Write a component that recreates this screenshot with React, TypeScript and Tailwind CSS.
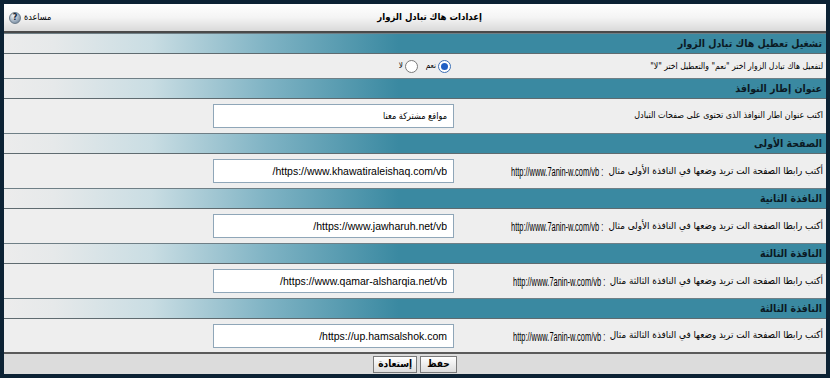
import React from "react";

const headerBg =
  "bg-[linear-gradient(to_left,#3a89a1_0%,#3a89a1_52%,#7fb3c4_68%,#c9dde3_82%,#e6e9ea_94%,#ececec_100%)]";

const arFont = "font-['DejaVu_Sans_Condensed','DejaVu_Sans',sans-serif]";
const latFont = "font-['Liberation_Sans',Arial,sans-serif]";

function Header({ children }: { children: React.ReactNode }) {
  return (
    <div
      className={`h-[20px] flex items-center px-[4px] border-t border-[#6f7f86] ${headerBg} ${arFont} text-[10.5px] font-bold text-[#0b1a24] whitespace-nowrap`}
    >
      {children}
    </div>
  );
}

function Row({
  label,
  example,
  value,
  h,
  labelSize,
  arabicValue,
}: {
  label: string;
  example?: string;
  value: string;
  h: string;
  labelSize: string;
  arabicValue?: boolean;
}) {
  return (
    <div className={`${h} flex items-stretch bg-[#eeeeee] border-t border-[#5f6b70]`}>
      <div className="w-[366px] flex items-center px-[3px] text-black gap-[3px] whitespace-nowrap">
        <span className={`${arFont} ${labelSize}`}>{label}</span>
        {example && (
          <span dir="ltr" className="inline-block w-[94px]">
            <span className={`inline-block origin-left scale-x-[0.62] ${latFont} text-[12px]`}>
              {example} :
            </span>
          </span>
        )}
      </div>
      <div className="flex-1 flex items-center pr-[6px]">
        <input
          readOnly
          value={value}
          dir="rtl"
          className={`w-[241px] h-[24px] bg-white border border-[#8fa6b8] px-[6px] text-black outline-none ${
            arabicValue ? `${arFont} text-[9px]` : `${latFont} text-[10.5px]`
          }`}
        />
      </div>
    </div>
  );
}

export default function App() {
  return (
    <div dir="rtl" className={`w-[830px] h-[378px] bg-[#0c2234] p-[4px] ${arFont}`}>
      <div className="w-full h-full flex flex-col bg-[#eeeeee]">
        {/* Title bar */}
        <div className="h-[29px] flex items-center border-b-2 border-[#4a4a4a] bg-[linear-gradient(to_bottom,#ffffff_0%,#f4f4f4_50%,#d9d9d9_100%)]">
          <div className="flex-1 text-center text-[9.5px] font-bold text-black pr-[18px]">
            إعدادات هاك تبادل الزوار
          </div>
          <div className="flex items-center gap-[3px] pl-[5px] text-[9px] text-black">
            <span>مساعدة</span>
            <span className="w-[12px] h-[12px] rounded-full bg-[radial-gradient(circle_at_35%_30%,#eef3f8,#8b9db0_70%,#5c6e80)] border border-[#6b7b8a] flex items-center justify-center text-[9px] font-bold text-[#1a2a3a] leading-none">
              ?
            </span>
          </div>
        </div>

        <Header>تشغيل تعطيل هاك تبادل الزوار</Header>
        <div className="h-[25px] flex items-stretch bg-[#eeeeee] border-t border-[#5f6b70]">
          <div className="w-[366px] flex items-center px-[3px] text-[8.6px] text-black whitespace-nowrap">
            لتفعيل هاك تبادل الزوار اختر "نعم" والتعطيل اختر "لا"
          </div>
          <div className="flex-1 flex items-center pr-[9px] gap-[8px] text-[8px]">
            <label className="flex items-center gap-[2px]">
              <span className="w-[13px] h-[13px] rounded-full border border-[#3b6fb6] bg-white flex items-center justify-center">
                <span className="w-[7px] h-[7px] rounded-full bg-[#1f5fc4]" />
              </span>
              <span>نعم</span>
            </label>
            <label className="flex items-center gap-[2px]">
              <span className="w-[13px] h-[13px] rounded-full border border-[#7a7a7a] bg-white" />
              <span>لا</span>
            </label>
          </div>
        </div>

        <Header>عنوان إطار النوافذ</Header>
        <Row
          h="h-[35px]"
          labelSize="text-[8.9px]"
          label="اكتب عنوان اطار النوافذ الذى تحتوى على صفحات التبادل"
          value="مواقع مشتركة معنا"
          arabicValue
        />

        <Header>الصفحة الأولى</Header>
        <Row
          h="h-[35px]"
          labelSize="text-[9.8px]"
          label="أكتب رابطا الصفحة الت تريد وضعها في النافذة الأولى مثال"
          example="http://www.7anin-w.com/vb"
          value="https://www.khawatiraleishaq.com/vb/"
        />

        <Header>النافذة الثانية</Header>
        <Row
          h="h-[35px]"
          labelSize="text-[9.8px]"
          label="أكتب رابطا الصفحة الت تريد وضعها في النافذة الأولى مثال"
          example="http://www.7anin-w.com/vb"
          value="https://www.jawharuh.net/vb/"
        />

        <Header>النافذة الثالثة</Header>
        <Row
          h="h-[35px]"
          labelSize="text-[9.8px]"
          label="أكتب رابطا الصفحة الت تريد وضعها في النافذة الثالثة مثال"
          example="http://www.7anin-w.com/vb"
          value="https://www.qamar-alsharqia.net/vb/"
        />

        <Header>النافذة الثالثة</Header>
        <Row
          h="h-[34px]"
          labelSize="text-[9.8px]"
          label="أكتب رابطا الصفحة الت تريد وضعها في النافذة الثالثة مثال"
          example="http://www.7anin-w.com/vb"
          value="https://up.hamsalshok.com/"
        />

        {/* Footer */}
        <div className="flex-1 flex items-center justify-center gap-[3px] bg-[#dcdcdc] border-t-2 border-[#5a5a5a]">
          <button className="h-[17px] px-[6px] text-[10px] font-bold text-black bg-[linear-gradient(to_bottom,#ffffff,#dcdcdc)] border border-[#7a7a7a] leading-none">
            حفظ
          </button>
          <button className="h-[17px] px-[4px] text-[10px] font-bold text-black bg-[linear-gradient(to_bottom,#ffffff,#dcdcdc)] border border-[#7a7a7a] leading-none">
            إستعادة
          </button>
        </div>
      </div>
    </div>
  );
}
